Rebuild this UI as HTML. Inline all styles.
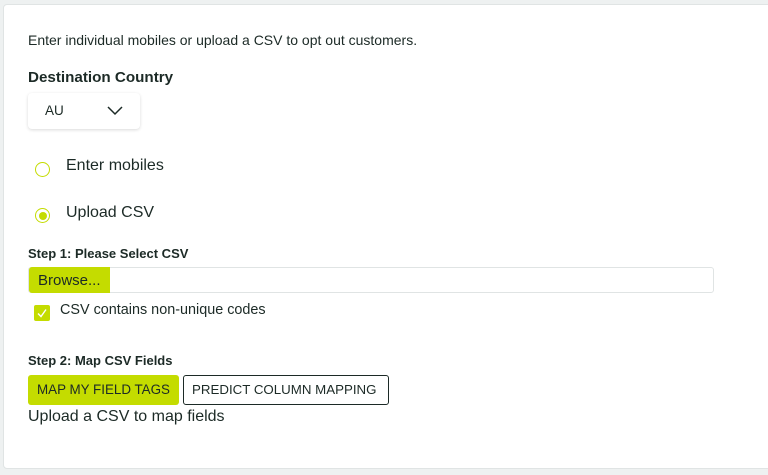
<!DOCTYPE html>
<html><head><style>
*{box-sizing:border-box;margin:0;padding:0}
body{width:768px;height:475px;background:#eef1f1;font-family:"Liberation Sans",sans-serif;color:#1c2a26;position:relative;overflow:hidden}
.card{position:absolute;left:3px;top:4px;width:800px;height:465px;background:#fff;border:1px solid #e0e4e4;border-radius:4px}
.a{position:absolute;white-space:nowrap}
</style></head><body>
<div class="card"></div>
<div class="a" style="left:28px;top:32px;font-size:14px">Enter individual mobiles or upload a CSV to opt out customers.</div>
<div class="a" style="left:28px;top:69px;font-size:15.2px;font-weight:bold">Destination Country</div>
<div class="a" style="left:28px;top:93px;width:112px;height:36px;border-radius:4px;box-shadow:0 1px 3px rgba(0,0,0,0.15);background:#fff"></div>
<div class="a" style="left:45px;top:103px;font-size:13.5px">AU</div>
<svg class="a" style="left:106px;top:104px" width="18" height="12"><path d="M2 3 L9 10 L16 3" fill="none" stroke="#1c2a26" stroke-width="1.5"/></svg>
<div class="a" style="left:35px;top:162px;width:15px;height:15px;border:1.5px solid #c4dc00;border-radius:50%"></div>
<div class="a" style="left:66px;top:157px;font-size:16px">Enter mobiles</div>
<div class="a" style="left:35px;top:208px;width:15px;height:15px;border:1.5px solid #c4dc00;border-radius:50%"></div>
<div class="a" style="left:38.5px;top:211.5px;width:8px;height:8px;background:#c4dc00;border-radius:50%"></div>
<div class="a" style="left:66px;top:204px;font-size:16px">Upload CSV</div>
<div class="a" style="left:28px;top:246px;font-size:13px;font-weight:bold">Step 1: Please Select CSV</div>
<div class="a" style="left:28px;top:267px;width:686px;height:26px;border:1px solid #e0e4e4;border-radius:3px"></div>
<div class="a" style="left:29px;top:267px;width:81px;height:26px;background:#c4dc00;border-radius:3px 0 0 3px;font-size:15px;padding:5px 0 0 9px">Browse...</div>
<div class="a" style="left:34px;top:305px;width:16px;height:16px;background:#c4dc00;border-radius:2px"></div>
<svg class="a" style="left:34px;top:305px" width="16" height="16"><path d="M4 8.5 L7 11.5 L12 4.5" fill="none" stroke="#fff" stroke-width="1.4"/></svg>
<div class="a" style="left:60px;top:302px;font-size:14.4px">CSV contains non-unique codes</div>
<div class="a" style="left:28px;top:353px;font-size:13px;font-weight:bold">Step 2: Map CSV Fields</div>
<div class="a" style="left:28px;top:375px;width:151px;height:30px;background:#c4dc00;border-radius:3px;font-size:13.4px;padding:7px 0 0 9px">MAP MY FIELD TAGS</div>
<div class="a" style="left:183px;top:375px;width:206px;height:30px;border:1px solid #1c2a26;border-radius:3px;font-size:13.3px;padding:6px 0 0 8px">PREDICT COLUMN MAPPING</div>
<div class="a" style="left:28px;top:408px;font-size:16px">Upload a CSV to map fields</div>
</body></html>
